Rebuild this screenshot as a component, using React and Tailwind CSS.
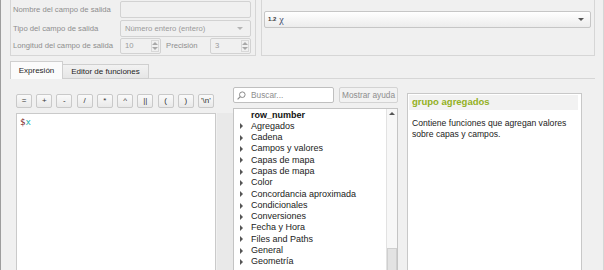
const items = [
  "Agregados",
  "Cadena",
  "Campos y valores",
  "Capas de mapa",
  "Capas de mapa",
  "Color",
  "Concordancia aproximada",
  "Condicionales",
  "Conversiones",
  "Fecha y Hora",
  "Files and Paths",
  "General",
  "Geometría",
  "Mapas",
];

const ops = ["=", "+", "-", "/", "*", "^", "||", "(", ")", "'\\n'"];

function Tri({ dir = "down", className = "" }) {
  const pts = {
    down: "0,0 6,0 3,3",
    up: "0,3 6,3 3,0",
    right: "0,0 3,3 0,6",
  }[dir];
  const w = dir === "right" ? 3 : 6;
  const h = dir === "right" ? 6 : 3;
  return (
    <svg width={w} height={h} viewBox={`0 0 ${w} ${h}`} className={`shrink-0 ${className}`}>
      <polygon points={pts} fill="currentColor" />
    </svg>
  );
}

function SpinBox({ value }) {
  return (
    <div className="flex h-[16px] w-[41px] shrink-0 rounded-[2px] border border-[#d2d2d2] bg-[#f0f0f0]">
      <span className="flex-1 pl-[4px] text-[7.7px] leading-[14px] text-[#9a9a9a]">
        {value}
      </span>
      <div className="my-[1px] mr-[1px] flex w-[8px] flex-col border border-[#d8d8d8] text-[#a8a8a8]">
        <div className="flex flex-1 items-center justify-center">
          <Tri dir="up" />
        </div>
        <div className="flex flex-1 items-center justify-center">
          <Tri />
        </div>
      </div>
    </div>
  );
}

export default function App() {
  return (
    <div className="h-[270px] w-[604px] overflow-hidden border-l border-r border-l-[#9d9d9d] border-r-[#d6d6d6] bg-[#f0f0f0] text-[#1e1e1e] [font-family:'Liberation_Sans',Arial,sans-serif]">
      {/* output field group boxes */}
      <div className="flex h-[56px]">
        <div className="ml-[9px] w-[246px] border-x border-b border-[#d6d6d6] pl-[2px] pr-[4px] text-[7.7px] text-[#8e8e8e]">
          <div className="mt-[1px] flex h-[17px] items-center">
            <span className="flex-1 whitespace-nowrap">Nombre del campo de salida</span>
            <div className="h-[17px] w-[131px] shrink-0 rounded-[2px] border border-[#d2d2d2] bg-[#f0f0f0]" />
          </div>
          <div className="mt-[2px] flex h-[17px] items-center">
            <span className="flex-1 whitespace-nowrap">Tipo del campo de salida</span>
            <div className="flex h-[17px] w-[131px] shrink-0 items-center rounded-[2px] border border-[#d2d2d2] bg-[#f0f0f0] pl-[4px] pr-[7px]">
              <span className="flex-1 text-[#9a9a9a]">Número entero (entero)</span>
              <Tri className="text-[#b5b5b5]" />
            </div>
          </div>
          <div className="mt-[1px] flex h-[16px] items-center">
            <span className="w-[107px] shrink-0 whitespace-nowrap">Longitud del campo de salida</span>
            <SpinBox value="10" />
            <span className="ml-[5px] flex-1 whitespace-nowrap">Precisión</span>
            <SpinBox value="3" />
          </div>
        </div>
        <div className="ml-[5px] w-[334px] border-x border-b border-[#d6d6d6]">
          <div className="ml-[2px] mt-[11px] flex h-[17px] w-[327px] items-center rounded-[2px] border border-[#c6c6c6] bg-gradient-to-b from-white to-[#ececec] pl-[3px] pr-[6px]">
            <span className="text-[6px] font-bold text-[#3a3a3a]">1.2</span>
            <span className="ml-[3px] flex-1 text-[10px] leading-[10px] text-[#3c4a6e] [font-family:'Liberation_Serif',serif]">
              χ
            </span>
            <Tri className="text-[#555]" />
          </div>
        </div>
      </div>

      {/* tabs */}
      <div className="mt-[5px] flex h-[18px] items-end text-[8px] text-[#1e1e1e]">
        <div className="ml-[9px] flex h-[18px] w-[53px] items-center justify-center border-x border-t border-[#cfcfcf] bg-[#fbfbfb]">
          Expresión
        </div>
        <div className="flex h-[15px] w-[86px] items-center justify-center border-b border-r border-t border-[#cfcfcf] bg-gradient-to-b from-[#f2f2f2] to-[#e6e6e6]">
          Editor de funciones
        </div>
        <div className="w-[446px] border-b border-[#d6d6d6]" />
      </div>

      {/* tab pane */}
      <div className="flex">
        {/* expression editor */}
        <div className="ml-[15px] w-[200px]">
          <div className="mt-[15px] flex h-[14px] w-[198px] justify-between">
            {ops.map((op, i) => (
              <button
                key={i}
                className="flex h-[14px] w-[16px] items-center justify-center rounded-[2px] border border-[#c9c9c9] bg-gradient-to-b from-[#fafafa] to-[#e9e9e9] text-[8px] leading-none text-[#333]"
              >
                {op}
              </button>
            ))}
          </div>
          <div className="mt-[5px] h-[200px] w-[200px] border border-[#cacaca] bg-white pl-[3px] pt-[2px] text-[9px] [font-family:'DejaVu_Sans_Mono',monospace]">
            <span className="text-[#7b2323]">$</span>
            <span className="text-[#22b3b3]">x</span>
          </div>
        </div>

        <div className="ml-px mt-[34px] h-[200px] w-[16px] bg-[#e9e9e9]" />

        {/* function list */}
        <div className="w-[165px]">
          <div className="mt-[8px] flex h-[16px]">
            <div className="flex w-[101px] items-center rounded-[2px] border border-[#bfbfbf] bg-white pl-[3px]">
              <svg width="9" height="9" viewBox="0 0 9 9" className="text-[#8a8a8a]">
                <circle cx="5.3" cy="3.7" r="2.8" fill="none" stroke="currentColor" strokeWidth="1" />
                <line x1="3.3" y1="5.7" x2="0.6" y2="8.4" stroke="currentColor" strokeWidth="1.2" />
              </svg>
              <span className="ml-[5px] text-[8.3px] text-[#8e8e8e]">Buscar...</span>
            </div>
            <div className="ml-[5px] flex w-[59px] items-center justify-center rounded-[2px] border border-[#d3d3d3] bg-[#f2f2f2] text-[8.3px] text-[#8e8e8e]">
              Mostrar ayuda
            </div>
          </div>
          <div className="mt-[5px] flex h-[200px] border border-[#c4c4c4] bg-white">
            <div className="flex-1 pt-[0.5px] text-[9px] leading-[11.3px]">
              <div className="h-[11.3px] pl-[17px] font-bold text-[#111]">row_number</div>
              {items.map((it, i) => (
                <div key={i} className="flex h-[11.3px] items-center text-[#222]">
                  <Tri dir="right" className="ml-[6px] mr-[8px] text-[#555]" />
                  <span>{it}</span>
                </div>
              ))}
            </div>
            <div className="flex w-[11px] flex-col border-l border-[#e2e2e2] bg-[#f7f7f7]">
              <div className="flex h-[10px] items-center justify-center text-[#555]">
                <Tri dir="up" />
              </div>
              <div className="h-[133px]" />
              <div className="h-[60px] border border-[#cfcfcf] bg-[#e3e3e3]" />
            </div>
          </div>
        </div>

        {/* help */}
        <div className="ml-[9px] mt-[14px] h-[200px] w-[175px] border border-[#c8c8c8] bg-white p-[1px]">
          <div className="mr-[2px] flex h-[15px] items-center bg-[#f2f2f2] pl-[3px] text-[9.5px] font-bold text-[#93b023]">
            grupo agregados
          </div>
          <p className="mt-[8px] pl-[3px] text-[8.6px] leading-[11px] text-[#222]">
            Contiene funciones que agregan valores
            <br />
            sobre capas y campos.
          </p>
        </div>
      </div>
    </div>
  );
}
